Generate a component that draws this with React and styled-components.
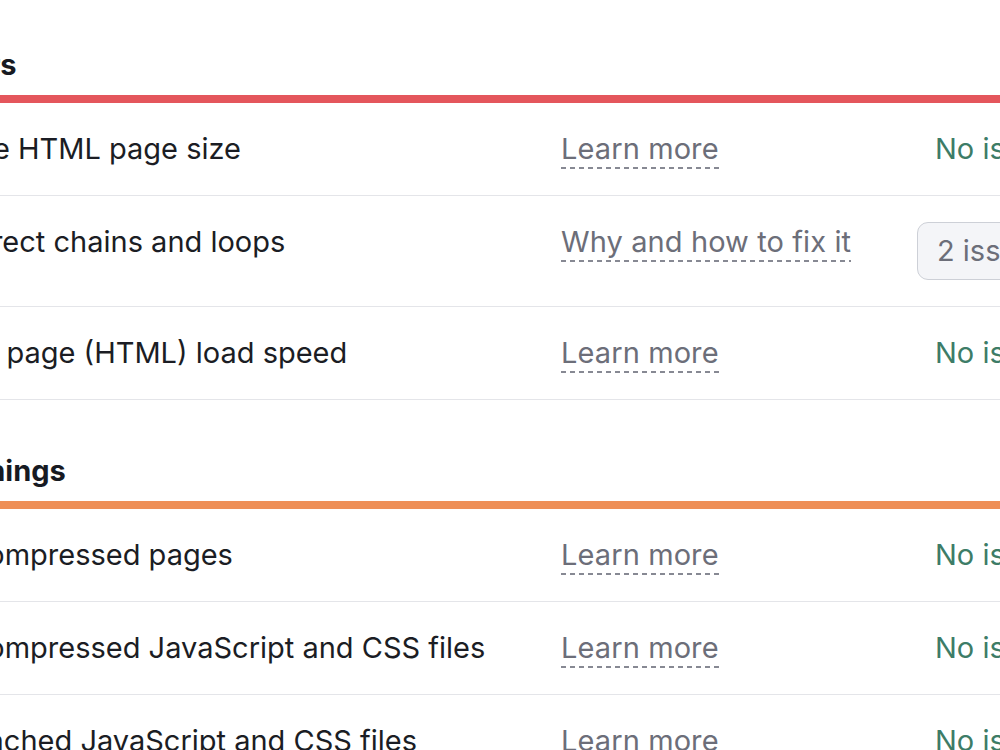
import React from 'react'
import styled, { createGlobalStyle } from 'styled-components'

const GlobalStyle = createGlobalStyle`
    html, body {
        margin: 0;
        padding: 0;
        background: #ffffff;
        overflow: hidden;
    }

    body {
        font-family: Inter, "Noto Sans", sans-serif;
        color: #171a22;
        -webkit-font-smoothing: antialiased;
    }
`

const Page = styled.div`
    width: 1300px;
    margin-left: -68px;
    padding-top: 45px;
`

const Section = styled.section`
    & + & {
        margin-top: 51px;
    }
`

const SectionTitle = styled.h3`
    margin: 0 0 10px -2px;
    font-size: 29px;
    font-weight: 700;
    line-height: 40px;
    color: #171a22;
`

const Bar = styled.div`
    height: 8px;
    background: ${p => p.$color};
`

const Row = styled.div`
    display: grid;
    grid-template-columns: 629px 356px 1fr;
    align-items: start;
    padding: 26px 0;
    border-bottom: 1px solid #e4e5e9;

    font-size: 29px;
    line-height: 40px;
`

const Name = styled.div`
    color: #1b1d24;
    white-space: nowrap;
`

const Hint = styled.a`
    justify-self: start;
    position: relative;
    color: #6c6e79;
    text-decoration: none;
    white-space: nowrap;
    letter-spacing: 0.1px;

    &::after {
        content: '';
        position: absolute;
        left: 0;
        right: 0;
        bottom: 0;
        height: 2px;
        background-image: repeating-linear-gradient(to right, #878993 0 5px, transparent 5px 9px);
    }
`

const Ok = styled.div`
    padding-left: 18px;
    color: #3d7c67;
    white-space: nowrap;
`

const IssuesBadge = styled.button`
    justify-self: start;
    height: 58px;
    padding: 0 19px;
    border: 1.5px solid #cdd0d7;
    border-radius: 11px;
    background: #f4f5f8;
    color: #6c6e79;
    font-family: inherit;
    font-size: 29px;
    line-height: 40px;
    white-space: nowrap;
`

const sections = [
    {
        title: 'Errors',
        color: '#e4565c',
        rows: [
            { name: 'Large HTML page size', hint: 'Learn more' },
            { name: 'Redirect chains and loops', hint: 'Why and how to fix it', issues: 2 },
            { name: 'Slow page (HTML) load speed', hint: 'Learn more' },
        ],
    },
    {
        title: 'Warnings',
        color: '#ee8f57',
        rows: [
            { name: 'Uncompressed pages', hint: 'Learn more' },
            { name: 'Uncompressed JavaScript and CSS files', hint: 'Learn more' },
            { name: 'Uncached JavaScript and CSS files', hint: 'Learn more' },
        ],
    },
]

export default function App() {
    return (
        <>
            <GlobalStyle />
            <Page>
                {sections.map(s => (
                    <Section key={s.title}>
                        <SectionTitle>{s.title}</SectionTitle>
                        <Bar $color={s.color} />
                        {s.rows.map(r => (
                            <Row key={r.name}>
                                <Name>{r.name}</Name>
                                <Hint href="#">{r.hint}</Hint>
                                {r.issues
                                    ? <IssuesBadge>{r.issues} issues</IssuesBadge>
                                    : <Ok>No issues</Ok>}
                            </Row>
                        ))}
                    </Section>
                ))}
            </Page>
        </>
    )
}
